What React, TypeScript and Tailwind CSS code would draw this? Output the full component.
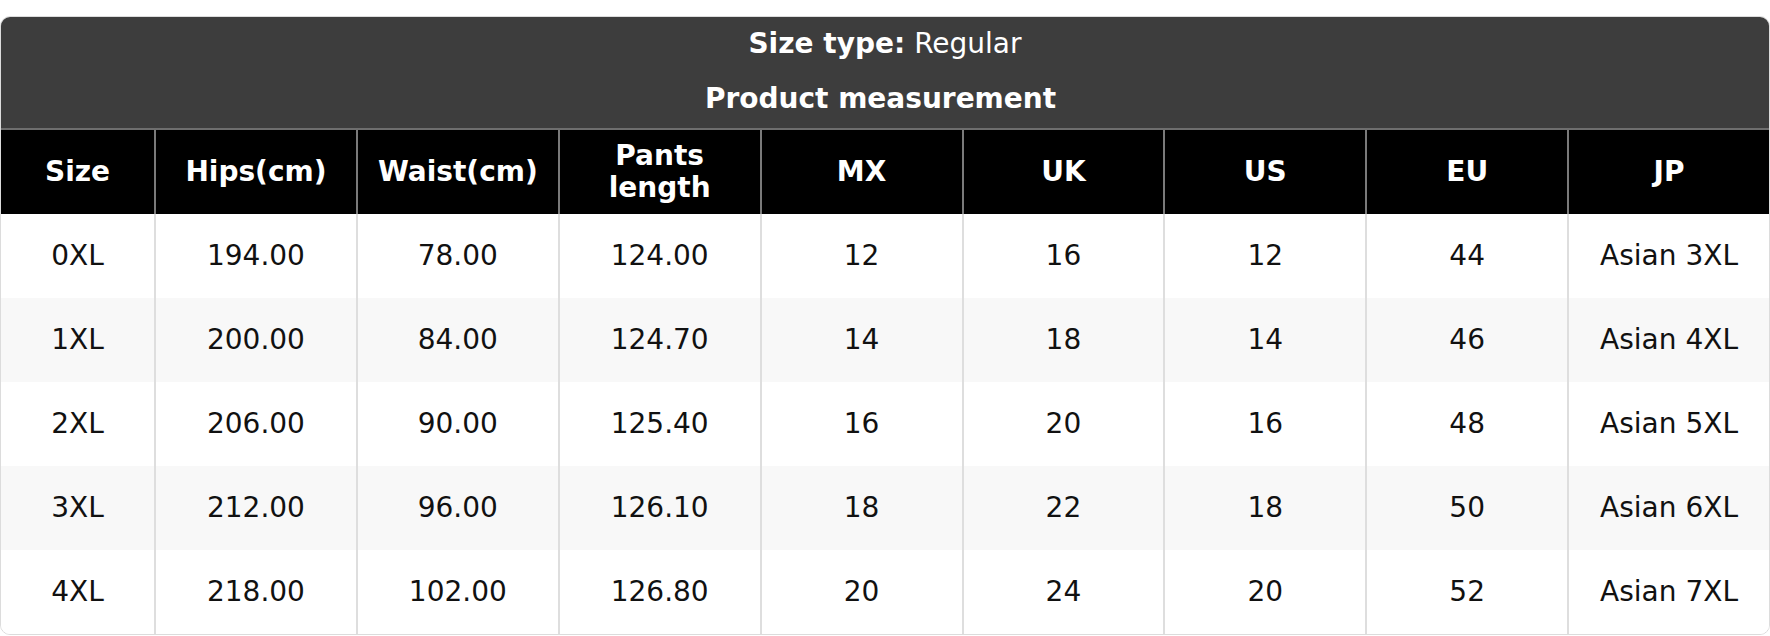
import React from 'react';

const headers = ['Size', 'Hips(cm)', 'Waist(cm)', 'Pants length', 'MX', 'UK', 'US', 'EU', 'JP'];

const rows = [
  ['0XL', '194.00', '78.00', '124.00', '12', '16', '12', '44', 'Asian 3XL'],
  ['1XL', '200.00', '84.00', '124.70', '14', '18', '14', '46', 'Asian 4XL'],
  ['2XL', '206.00', '90.00', '125.40', '16', '20', '16', '48', 'Asian 5XL'],
  ['3XL', '212.00', '96.00', '126.10', '18', '22', '18', '50', 'Asian 6XL'],
  ['4XL', '218.00', '102.00', '126.80', '20', '24', '20', '52', 'Asian 7XL'],
];

export default function App() {
  return (
    <div className="w-[1770px] h-[636px] bg-white pt-[16px] font-['DejaVu_Sans',sans-serif]">
      <div className="rounded-[10px] border border-[#dcdcdc] overflow-hidden">
        {/* title block */}
        <div className="bg-[#3d3d3d] text-white text-[28px] leading-[32px]">
          <div className="h-[53px] flex items-center justify-center">
            <span className="font-bold">Size type:</span>
            <span className="ml-[9px]">Regular</span>
          </div>
          <div className="h-[58px] flex items-center justify-center font-bold pr-[9px]">Product measurement</div>
        </div>

        {/* column headers */}
        <div className="grid grid-cols-[153px_repeat(8,1fr)] bg-black border-t-2 border-[#6e6e6e] text-white font-bold text-[28px] leading-[32px]">
          {headers.map((h, i) => (
            <div
              key={h}
              className={`h-[84px] flex items-center justify-center text-center px-2 ${i > 0 ? 'border-l-2 border-[#7a7a7a]' : ''}`}
            >
              {h === 'Pants length' ? (
                <span>
                  Pants
                  <br />
                  length
                </span>
              ) : (
                h
              )}
            </div>
          ))}
        </div>

        {/* body */}
        {rows.map((r, ri) => (
          <div
            key={r[0]}
            className={`grid grid-cols-[153px_repeat(8,1fr)] text-[28px] leading-[32px] text-[#111] ${ri % 2 === 1 ? 'bg-[#f8f8f8]' : 'bg-white'}`}
          >
            {r.map((c, ci) => (
              <div
                key={ci}
                className={`h-[84px] flex items-center justify-center ${ci > 0 ? 'border-l-2 border-[#dedede]' : ''}`}
              >
                {c}
              </div>
            ))}
          </div>
        ))}
      </div>
    </div>
  );
}
